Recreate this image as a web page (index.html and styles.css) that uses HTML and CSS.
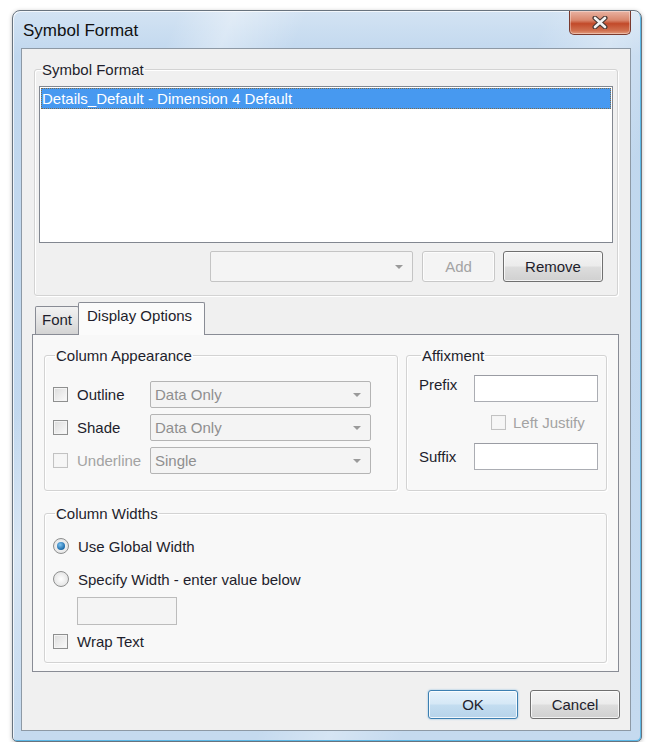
FILE: index.html
```html
<!DOCTYPE html>
<html lang="en">
<head>
    <meta charset="UTF-8">
    <title>Symbol Format</title>
    <link rel="stylesheet" href="styles.css">
</head>
<body>
    <div class="window">
        <div class="titlebar">
            <span class="title">Symbol Format</span>
            <button class="close" title="Close">
                <svg width="16" height="13" viewBox="0 0 16 13">
                    <path d="M3 2 L13 11 M13 2 L3 11" stroke="#4a3a36" stroke-width="5" stroke-linecap="round"/>
                    <path d="M3 2 L13 11 M13 2 L3 11" stroke="#f4f4f4" stroke-width="2.6" stroke-linecap="round"/>
                </svg>
            </button>
        </div>

        <div class="client">
            <fieldset class="group group-format">
                <legend>Symbol Format</legend>
                <div class="listbox">
                    <div class="list-item selected">Details_Default - Dimension 4 Default</div>
                </div>
                <div class="format-actions">
                    <div class="combo combo-top"><span></span><span class="arrow"></span></div>
                    <button class="btn btn-add" disabled>Add</button>
                    <button class="btn btn-remove">Remove</button>
                </div>
            </fieldset>

            <div class="tabs-wrap">
                <div class="tabs">
                    <div class="tab">Font</div>
                    <div class="tab active">Display Options</div>
                </div>
                <div class="tab-panel">
                    <div class="panel-row">
                        <fieldset class="group appearance">
                            <legend>Column Appearance</legend>
                            <div class="app-row">
                                <label class="check"><span class="box"></span>Outline</label>
                                <div class="combo"><span>Data Only</span><span class="arrow"></span></div>
                            </div>
                            <div class="app-row">
                                <label class="check"><span class="box"></span>Shade</label>
                                <div class="combo"><span>Data Only</span><span class="arrow"></span></div>
                            </div>
                            <div class="app-row">
                                <label class="check disabled"><span class="box"></span>Underline</label>
                                <div class="combo"><span>Single</span><span class="arrow"></span></div>
                            </div>
                        </fieldset>

                        <fieldset class="group affix">
                            <legend>Affixment</legend>
                            <div class="affix-grid">
                                <span class="affix-label prefix">Prefix</span>
                                <div class="textbox"></div>
                                <span></span>
                                <label class="check disabled justify"><span class="box"></span>Left Justify</label>
                                <span class="affix-label">Suffix</span>
                                <div class="textbox"></div>
                            </div>
                        </fieldset>
                    </div>

                    <fieldset class="group widths">
                        <legend>Column Widths</legend>
                        <label class="radio-row"><span class="radio checked"></span>Use Global Width</label>
                        <label class="radio-row second"><span class="radio"></span>Specify Width - enter value below</label>
                        <div class="textbox width-box"></div>
                        <label class="check wrap"><span class="box"></span>Wrap Text</label>
                    </fieldset>
                </div>
            </div>

            <div class="dialog-buttons">
                <button class="btn btn-default">OK</button>
                <button class="btn">Cancel</button>
            </div>
        </div>
    </div>
</body>
</html>
```

FILE: styles.css
```css
* {
    box-sizing: border-box;
}

body {
    margin: 0;
    background: #fff;
    font-family: "Liberation Sans", Arial, sans-serif;
    font-size: 15px;
    line-height: 17px;
    color: #1e1e2c;
}

/* window frame */
.window {
    margin: 10px 0 0 12px;
    width: 630px;
    height: 732px;
    padding: 0 10px 10px 8px;
    border: 1px solid #68737e;
    border-radius: 8px 8px 5px 5px;
    background:
        linear-gradient(112deg, transparent 18%, rgba(255, 255, 255, 0.35) 24%, transparent 32%,
                        transparent 58%, rgba(255, 255, 255, 0.3) 66%, transparent 74%),
        linear-gradient(#d3e3f3, #c0d7ee 45px, #c5daef);
    box-shadow: inset -1px -1px 0 #5cb8e6, inset 1px 1px 0 rgba(255, 255, 255, 0.7), 0 1px 4px rgba(0, 0, 0, 0.25);
    display: flex;
    flex-direction: column;
}

.titlebar {
    height: 37px;
    display: flex;
    justify-content: space-between;
    align-items: flex-start;
}

.title {
    margin: 10px 0 0 2px;
    font-size: 17px;
    line-height: 20px;
    color: #111;
}

.close {
    width: 62px;
    height: 24px;
    padding: 0;
    border: 1px solid #7a3a2e;
    border-top: none;
    border-radius: 0 0 5px 5px;
    background: linear-gradient(#e9b3a3, #d9876d 40%, #c24a2a 55%, #d0704f 85%, #e39b7e);
    box-shadow: inset 0 0 0 1px rgba(255, 255, 255, 0.35);
    display: flex;
    align-items: center;
    justify-content: center;
}

/* client area */
.client {
    flex: 1;
    border: 1px solid #8d99a5;
    background: #f0f0f0;
    padding: 12px 12px 11px;
    display: flex;
    flex-direction: column;
}

.group {
    margin: 0;
    min-width: 0;
    border: 1px solid #d3d3d3;
    border-radius: 3px;
    box-shadow: inset 1px 1px 0 #fff, 1px 1px 0 #fff;
}

.group legend {
    padding: 0 1px;
    margin-left: 2px;
    line-height: 17px;
}

.group-format {
    padding: 8px 4px 13px;
}

.listbox {
    height: 157px;
    border: 1px solid #828790;
    background: #fff;
    padding: 1px;
}

.list-item {
    height: 21px;
    line-height: 19px;
    border: 1px dotted #7d6a4a;
    background: #4799f0;
    color: #fff;
}

.format-actions {
    margin-top: 8px;
    padding-right: 10px;
    display: flex;
    justify-content: flex-end;
}

.combo {
    width: 221px;
    height: 27px;
    border: 1px solid #b4b4b4;
    border-radius: 2px;
    background: #f4f4f4;
    color: #8f8f8f;
    padding: 0 9px 0 4px;
    display: flex;
    align-items: center;
    justify-content: space-between;
}

.combo-top {
    width: 203px;
    height: 31px;
    margin-right: 9px;
    border-color: #c4c4c4;
}

.arrow {
    width: 0;
    height: 0;
    border-left: 4px solid transparent;
    border-right: 4px solid transparent;
    border-top: 4px solid #9a9a9a;
}

.btn {
    height: 31px;
    padding: 0;
    font: inherit;
    color: #1e1e2c;
    border: 1px solid #707070;
    border-radius: 3px;
    background: linear-gradient(#f4f4f4, #ececec 48%, #dddddd 52%, #d0d0d0);
    box-shadow: inset 0 0 0 1px rgba(255, 255, 255, 0.75);
}

.btn-add {
    width: 73px;
    margin-right: 8px;
    color: #a3a3a3;
    border-color: #c8c8c8;
    background: #f4f4f4;
}

.btn-remove {
    width: 100px;
}

/* tabs */
.tabs-wrap {
    margin: 6px -1px 0 -2px;
}

.tabs {
    display: flex;
    align-items: flex-end;
    padding-left: 3px;
}

.tab {
    height: 28px;
    padding: 4px 6px 0;
    border: 1px solid #898c95;
    border-bottom: none;
    border-radius: 2px 2px 0 0;
    background: linear-gradient(#f2f2f2, #e4e4e4 50%, #d3d3d3);
}

.tab.active {
    position: relative;
    z-index: 1;
    height: 33px;
    margin-bottom: -1px;
    margin-left: -1px;
    padding: 4px 12px 0 8px;
    background: #fbfbfb;
}

.tab-panel {
    height: 338px;
    border: 1px solid #898c95;
    background: #f8f8f8;
    padding: 12px 11px 8px;
}

.panel-row {
    display: flex;
    gap: 8px;
    margin-bottom: 14px;
}

.appearance {
    width: 354px;
    height: 144px;
    padding: 17px 26px 0 8px;
}

.app-row {
    display: flex;
    align-items: center;
    margin-bottom: 6px;
}

.check {
    display: flex;
    align-items: center;
    gap: 9px;
}

.app-row .check {
    width: 97px;
}

.check.disabled {
    color: #a3a3a3;
}

.box {
    width: 15px;
    height: 15px;
    border: 1px solid #8e8f8f;
    background: linear-gradient(135deg, #dcdcdc, #fbfbfb);
    box-shadow: inset 0 0 0 1px #f4f4f4;
}

.disabled .box {
    border-color: #c2c2c2;
    background: #f6f6f6;
}

.affix {
    width: 201px;
    height: 144px;
    padding: 11px 8px 0 12px;
}

.affix-grid {
    display: grid;
    grid-template-columns: 55px 124px;
    grid-template-rows: 27px 41px 27px;
}

.affix-label {
    align-self: center;
}

.affix-label.prefix {
    align-self: start;
    padding-top: 1px;
}

.justify {
    padding-left: 17px;
    gap: 7px;
}

.textbox {
    height: 27px;
    border: 1px solid #abadb3;
    border-top-color: #9a9ca3;
    background: #fff;
}

.widths {
    height: 158px;
    padding: 14px 8px 0;
}

.radio-row {
    height: 20px;
    display: flex;
    align-items: center;
    gap: 9px;
}

.radio-row.second {
    margin-top: 13px;
}

.radio {
    width: 16px;
    height: 16px;
    border-radius: 50%;
    border: 1px solid #8e8f8f;
    background: radial-gradient(circle, #fff, #dcdcdc);
    display: flex;
    align-items: center;
    justify-content: center;
}

.radio.checked::after {
    content: "";
    width: 8px;
    height: 8px;
    border-radius: 50%;
    background: radial-gradient(circle at 40% 35%, #7ec4f2, #1d6aa8 70%);
}

.width-box {
    width: 100px;
    height: 28px;
    margin: 8px 0 0 24px;
    background: #f4f4f4;
    border-color: #bcbcbc;
}

.wrap {
    height: 20px;
    margin-top: 6px;
}

/* dialog buttons */
.dialog-buttons {
    margin: auto -2px 0 0;
    display: flex;
    justify-content: flex-end;
    gap: 12px;
}

.dialog-buttons .btn {
    width: 90px;
    height: 29px;
}

.btn-default {
    border-color: #3c7fb1;
    background: linear-gradient(#e6f2fb, #d5e8f6 48%, #c3ddf0 52%, #b6d3ea);
    box-shadow: inset 0 0 0 1px rgba(255, 255, 255, 0.8), 0 0 2px #7fb6dc;
}
```
